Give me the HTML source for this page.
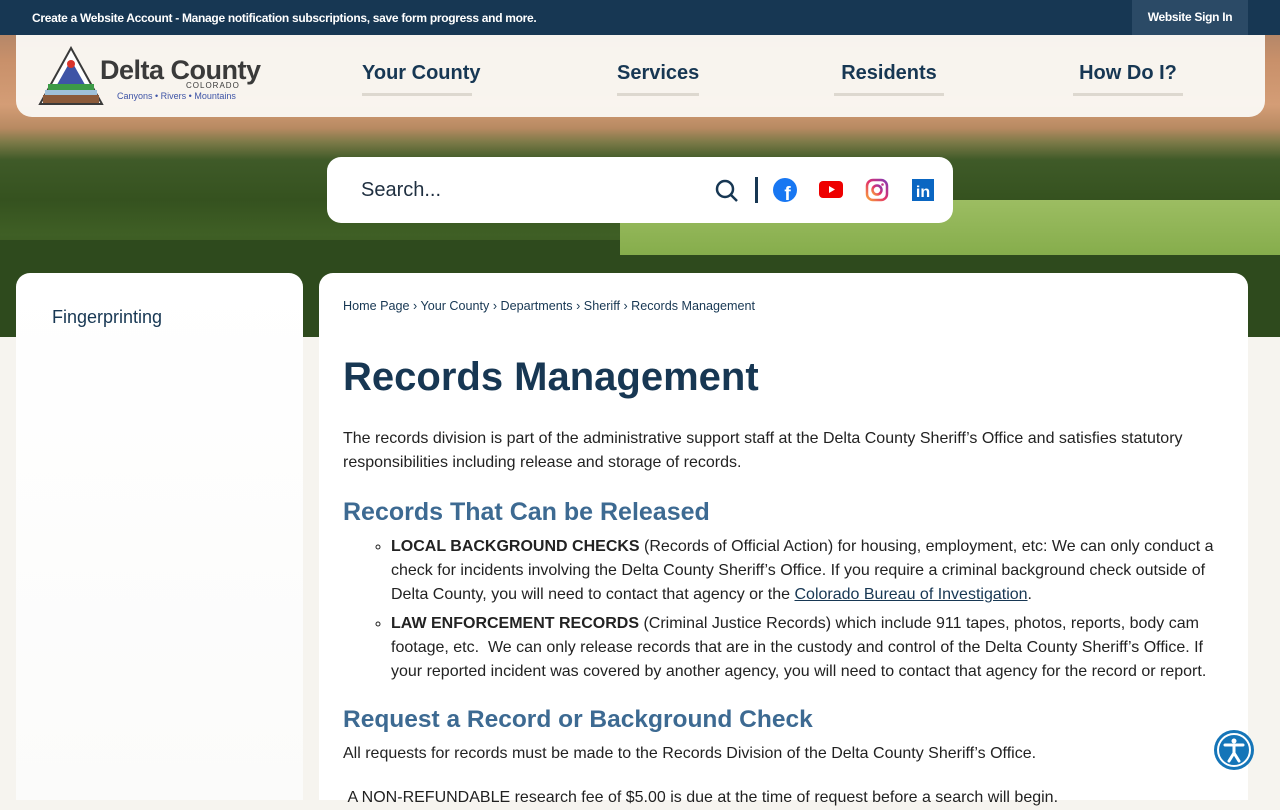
<!DOCTYPE html>
<html><head><meta charset="utf-8"><style>
*{margin:0;padding:0;box-sizing:border-box}
body{width:1280px;height:800px;overflow:hidden;font-family:"Liberation Sans",sans-serif;background:#f6f4ef;position:relative}
.hero{position:absolute;left:0;top:0;width:1280px;height:337px;background:
linear-gradient(180deg,#9a7a66 0px,#c8906a 60px,#d49d76 105px,#b88a62 128px,#7d7a48 142px,#3f5a28 160px,#35521f 200px,#3f5f25 235px,#34511f 270px,#2c461c 337px)}
.field{position:absolute;left:620px;top:200px;width:660px;height:55px;background:linear-gradient(180deg,#9cbd62,#86ad4c);}
.trees{position:absolute;left:0;top:240px;width:1280px;height:97px;background:#2e4a1d}
.top{position:absolute;left:0;top:0;width:1280px;height:35px;background:#173753;color:#fff;font-size:12px;font-weight:bold;letter-spacing:-.3px}
.top .l{position:absolute;left:32px;top:11px}
.top .r{position:absolute;left:1132px;top:0;width:116px;height:35px;background:#2b4a66;text-align:center;line-height:35px}
.nav{position:absolute;left:16px;top:35px;width:1249px;height:82px;background:rgba(250,248,244,.96);border-radius:0 0 16px 16px}
.nav a{position:absolute;top:27px;font-size:20px;font-weight:bold;color:#173753;text-decoration:none;padding-bottom:8px;border-bottom:3px solid #ddd8cf;text-align:center;white-space:nowrap}
.search{position:absolute;left:327px;top:157px;width:626px;height:66px;background:#fff;border-radius:14px}
.search span{position:absolute;left:34px;top:22px;font-size:20px;color:#1f2f40}
.side{position:absolute;left:16px;top:273px;width:287px;height:527px;background:linear-gradient(180deg,#fff,#fbfbfa);border-radius:14px 14px 0 0}
.side p{position:absolute;left:36px;top:34px;font-size:18px;color:#173753}
.main{position:absolute;left:319px;top:273px;width:929px;height:527px;background:#fff;border-radius:14px 14px 0 0;color:#222}
.bc{position:absolute;left:24px;top:26px;font-size:12.6px;color:#173753}
h1{position:absolute;left:24px;top:82px;font-size:40px;color:#173753;font-weight:bold}
.t{position:absolute;left:24px;font-size:16px;line-height:24px;width:880px}
h2{position:absolute;left:24px;font-size:25px;color:#3d6a92;font-weight:bold}
ul{position:absolute;left:72px;width:840px;font-size:16px;line-height:24px;list-style:circle}
li{margin-bottom:5px}
a.u{color:#173753;text-decoration:underline}
.acc{position:absolute;left:1214px;top:730px;width:40px;height:40px;border-radius:50%;background:#1575b8}
</style></head><body>
<div class="hero"><div class="trees"></div><div class="field"></div></div>
<div class="top"><span class="l">Create a Website Account - Manage notification subscriptions, save form progress and more.</span><span class="r">Website Sign In</span></div>
<div class="nav">
<svg style="position:absolute;left:22px;top:11px" width="66" height="60" viewBox="0 0 66 60"><polygon points="33,2 64,58 2,58" fill="#fff" stroke="#3a3a3a" stroke-width="2"/><polygon points="33,14 50,44 16,44" fill="#3e54a6"/><rect x="10" y="38" width="46" height="6" fill="#3c9a47"/><rect x="7" y="44" width="52" height="5" fill="#9fc0d8"/><rect x="5" y="49" width="56" height="8" fill="#8b5a3a"/><circle cx="33" cy="18" r="4" fill="#d8342b"/></svg>
<div style="position:absolute;left:84px;top:20px;font-size:27px;font-weight:bold;color:#3a3a3a;letter-spacing:-.5px">Delta County</div>
<div style="position:absolute;left:170px;top:46px;font-size:8px;color:#3a3a3a;letter-spacing:1px">COLORADO</div>
<div style="position:absolute;left:101px;top:56px;font-size:9px;color:#3e54a6">Canyons • Rivers • Mountains</div>
<a style="left:346px;width:110px">Your County</a>
<a style="left:601px;width:82px">Services</a>
<a style="left:818px;width:110px">Residents</a>
<a style="left:1057px;width:110px">How Do I?</a>
</div>
<div class="search"><span>Search...</span>
<svg style="position:absolute;left:388px;top:22px" width="24" height="24"><circle cx="10" cy="10" r="8" fill="none" stroke="#173753" stroke-width="2.5"/><line x1="16" y1="16" x2="22" y2="22" stroke="#173753" stroke-width="2.5"/></svg>
<div style="position:absolute;left:428px;top:20px;width:3px;height:26px;background:#173753"></div>
<svg style="position:absolute;left:446px;top:21px" width="24" height="24"><circle cx="12" cy="12" r="12" fill="#1877f2"/><text x="14.5" y="22" font-size="19" font-weight="bold" fill="#fff" text-anchor="middle" font-family="Liberation Sans">f</text></svg>
<svg style="position:absolute;left:492px;top:24px" width="24" height="18"><rect width="24" height="17" rx="4" fill="#e00"/><polygon points="10,5 16,8.5 10,12" fill="#fff"/></svg>
<svg style="position:absolute;left:538px;top:21px" width="24" height="24"><defs><linearGradient id="g" x1="0" y1="1" x2="1" y2="0"><stop offset="0" stop-color="#f9a13a"/><stop offset=".5" stop-color="#e1306c"/><stop offset="1" stop-color="#833ab4"/></linearGradient></defs><rect x="2" y="2" width="20" height="20" rx="6" fill="none" stroke="url(#g)" stroke-width="2.5"/><circle cx="12" cy="12" r="4.5" fill="none" stroke="url(#g)" stroke-width="2.5"/><circle cx="17.5" cy="6.5" r="1.3" fill="#c13584"/></svg>
<svg style="position:absolute;left:585px;top:22px" width="22" height="22"><rect width="22" height="22" fill="#0a66c2"/><text x="11" y="18" font-size="16" font-weight="bold" fill="#fff" text-anchor="middle" font-family="Liberation Sans">in</text></svg>
</div>
<div class="side"><p>Fingerprinting</p></div>
<div class="main">
<div class="bc">Home Page › Your County › Departments › Sheriff › Records Management</div>
<h1>Records Management</h1>
<div class="t" style="top:154px">The records division is part of the administrative support staff at the Delta County Sheriff’s Office and satisfies statutory responsibilities including release and storage of records.</div>
<h2 style="top:225px">Records That Can be Released</h2>
<ul style="top:262px">
<li><b>LOCAL BACKGROUND CHECKS</b> (Records of Official Action) for housing, employment, etc: We can only conduct a check for incidents involving the Delta County Sheriff’s Office. If you require a criminal background check outside of Delta County, you will need to contact that agency or the <a class="u">Colorado Bureau of Investigation</a>.</li>
<li><b>LAW ENFORCEMENT RECORDS</b> (Criminal Justice Records) which include 911 tapes, photos, reports, body cam footage, etc.&nbsp; We can only release records that are in the custody and control of the Delta County Sheriff’s Office. If your reported incident was covered by another agency, you will need to contact that agency for the record or report.</li>
</ul>
<h2 style="top:433px;font-size:24.5px">Request a Record or Background Check</h2>
<div class="t" style="top:469px">All requests for records must be made to the Records Division of the Delta County Sheriff’s Office.</div>
<div class="t" style="top:513px">&nbsp;A NON-REFUNDABLE research fee of $5.00 is due at the time of request before a search will begin.</div>
</div>
<div class="acc"><svg width="40" height="40"><circle cx="20" cy="20" r="16" fill="none" stroke="#fff" stroke-width="2"/><circle cx="20" cy="11" r="2.5" fill="#fff"/><path d="M11 15 L29 15 M20 15 L20 23 L15 31 M20 23 L25 31" stroke="#fff" stroke-width="3" fill="none" stroke-linecap="round"/></svg></div>
</body></html>
